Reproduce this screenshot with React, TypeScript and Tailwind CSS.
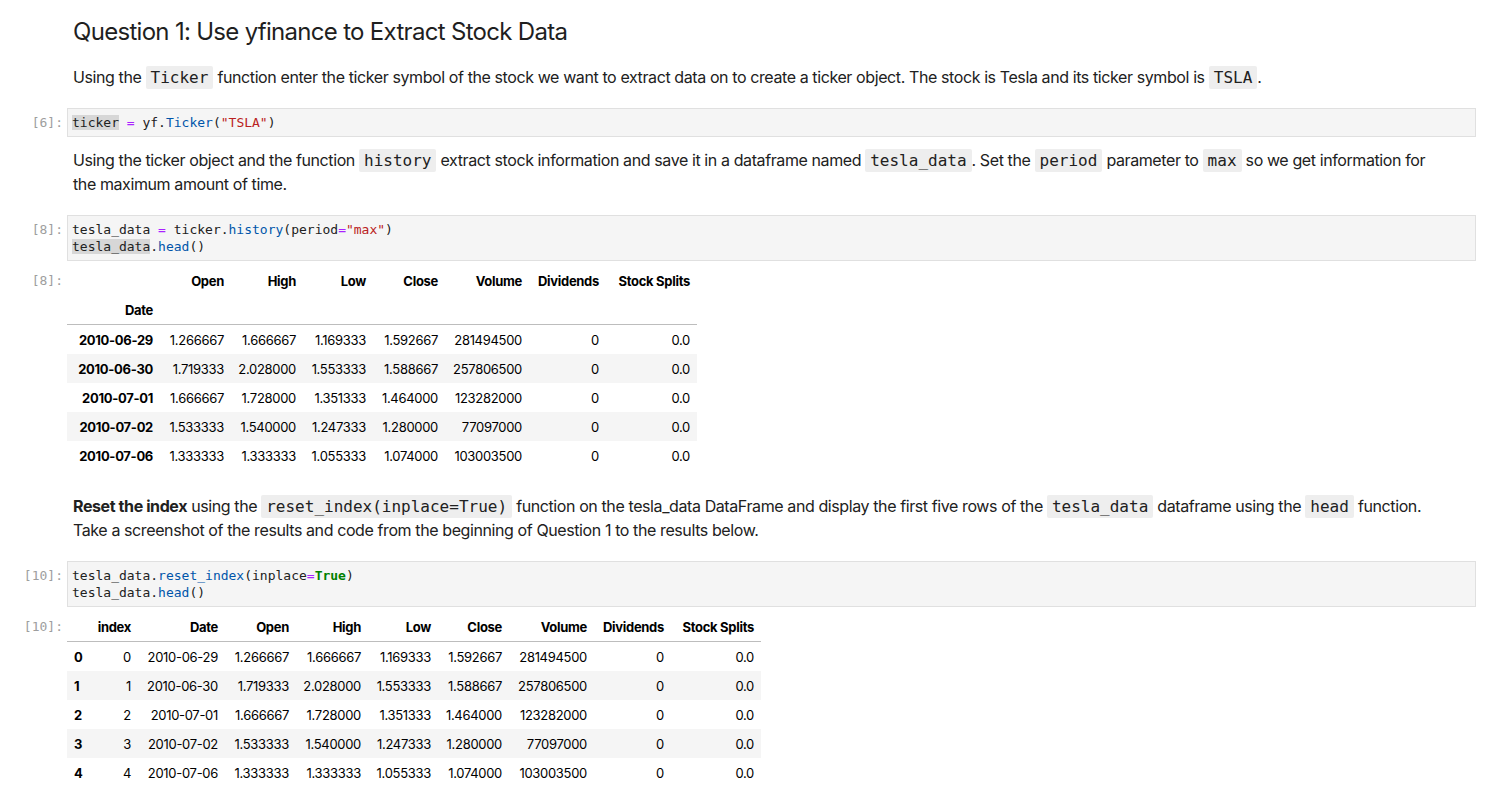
import React from "react";

const SANS = "font-['Inter','Noto_Sans',sans-serif]";
const MONO = "font-['DejaVu_Sans_Mono','Liberation_Mono',monospace]";

function C({ children }: { children: React.ReactNode }) {
  return (
    <code
      className={`${MONO} rounded-[2px] bg-[#eeeeee] px-[5px] py-[2px] text-[16px] leading-[16px] tracking-normal text-[#212121]`}
    >
      {children}
    </code>
  );
}

function Prompt({ n, pt }: { n: number; pt: string }) {
  return (
    <div
      className={`${MONO} w-[67px] shrink-0 pr-[4px] text-right text-[13px] leading-[17px] text-[#9e9e9e] ${pt}`}
    >
      [{n}]:
    </div>
  );
}

function CodeCell({ n, className, children }: { n: number; className: string; children: React.ReactNode }) {
  return (
    <div className={`flex ${className}`}>
      <Prompt n={n} pt="pt-[6px]" />
      <div
        className={`${MONO} mr-[11px] flex-1 border border-[#e0e0e0] bg-[#f5f5f5] px-[4px] py-[5px] text-[13px] leading-[17px] whitespace-pre text-[#212121]`}
      >
        {children}
      </div>
    </div>
  );
}

const hl = "bg-[#d7d7d7]";
const op = "text-[#aa22ff]";
const fn = "text-[#0055aa]";
const str = "text-[#ba2121]";

type Row = string[];

const rows1: Row[] = [
  ["2010-06-29", "1.266667", "1.666667", "1.169333", "1.592667", "281494500", "0", "0.0"],
  ["2010-06-30", "1.719333", "2.028000", "1.553333", "1.588667", "257806500", "0", "0.0"],
  ["2010-07-01", "1.666667", "1.728000", "1.351333", "1.464000", "123282000", "0", "0.0"],
  ["2010-07-02", "1.533333", "1.540000", "1.247333", "1.280000", "77097000", "0", "0.0"],
  ["2010-07-06", "1.333333", "1.333333", "1.055333", "1.074000", "103003500", "0", "0.0"],
];

const cols = ["Open", "High", "Low", "Close", "Volume", "Dividends", "Stock Splits"];
const w1 = ["w-[93px]", "w-[71px]", "w-[72px]", "w-[70px]", "w-[72px]", "w-[84px]", "w-[77px]", "w-[91px]"];
const w2 = [
  "w-[22px]",
  "w-[49px]",
  "w-[87px]",
  "w-[71px]",
  "w-[72px]",
  "w-[70px]",
  "w-[71px]",
  "w-[85px]",
  "w-[77px]",
  "w-[90px]",
];

const cell = "px-[7px] py-[6.5px] leading-[16px] text-right whitespace-nowrap";

function Table1() {
  return (
    <table
      className={`${SANS} w-[630px] table-fixed border-collapse text-[13px] tracking-[-0.3px] text-[#000000]`}
    >
      <thead className="border-b border-[#bdbdbd]">
        <tr>
          <th className={`${cell} ${w1[0]}`}></th>
          {cols.map((c, i) => (
            <th key={c} className={`${cell} ${w1[i + 1]} font-bold`}>
              {c}
            </th>
          ))}
        </tr>
        <tr>
          <th className={`${cell} font-bold`}>Date</th>
          {cols.map((c) => (
            <th key={c} className={cell}></th>
          ))}
        </tr>
      </thead>
      <tbody>
        {rows1.map((r) => (
          <tr key={r[0]} className="even:bg-[#f5f5f5]">
            <th className={`${cell} font-bold`}>{r[0]}</th>
            {r.slice(1).map((v, i) => (
              <td key={i} className={cell}>
                {v}
              </td>
            ))}
          </tr>
        ))}
      </tbody>
    </table>
  );
}

function Table2() {
  const head = ["index", "Date", ...cols];
  return (
    <table
      className={`${SANS} w-[694px] table-fixed border-collapse text-[13px] tracking-[-0.3px] text-[#000000]`}
    >
      <thead className="border-b border-[#bdbdbd]">
        <tr>
          <th className={`${cell} ${w2[0]}`}></th>
          {head.map((c, i) => (
            <th key={c} className={`${cell} ${w2[i + 1]} font-bold`}>
              {c}
            </th>
          ))}
        </tr>
      </thead>
      <tbody>
        {rows1.map((r, i) => (
          <tr key={r[0]} className="even:bg-[#f5f5f5]">
            <th className={`${cell} text-left! font-bold`}>{i}</th>
            <td className={cell}>{i}</td>
            {r.map((v, j) => (
              <td key={j} className={cell}>
                {v}
              </td>
            ))}
          </tr>
        ))}
      </tbody>
    </table>
  );
}

function Md({ className, children }: { className: string; children: React.ReactNode }) {
  return (
    <div className={`flex ${className}`}>
      <div className="w-[67px] shrink-0" />
      <div
        className={`${SANS} mr-[11px] flex-1 pl-[6px] pr-[30px] text-[16px] leading-[24px] tracking-[-0.4px] text-[#212121]`}
      >
        {children}
      </div>
    </div>
  );
}

export default function App() {
  return (
    <div className="min-h-screen w-full bg-white pb-[20px] pt-[17px]">
      <Md className="">
        <h2 className="text-[24px] leading-[30px] font-normal tracking-[-0.7px] text-[#1f1f1f]">
          Question 1: Use yfinance to Extract Stock Data
        </h2>
      </Md>

      <Md className="mt-[18px]">
        <p>
          Using the <C>Ticker</C> function enter the ticker symbol of the stock we want to extract data on to create a
          ticker object. The stock is Tesla and its ticker symbol is <C>TSLA</C>.
        </p>
      </Md>

      <CodeCell n={6} className="mt-[19px]">
        <span className={hl}>ticker</span> <span className={op}>=</span> yf.<span className={fn}>Ticker</span>(
        <span className={str}>"TSLA"</span>)
      </CodeCell>

      <Md className="mt-[11px]">
        <p>
          Using the ticker object and the function <C>history</C> extract stock information and save it in a dataframe
          named <C>tesla_data</C>. Set the <C>period</C> parameter to <C>max</C> so we get information for the maximum
          amount of time.
        </p>
      </Md>

      <CodeCell n={8} className="mt-[19px]">
        tesla_data <span className={op}>=</span> ticker.<span className={fn}>history</span>(period
        <span className={op}>=</span>
        <span className={str}>"max"</span>){"\n"}
        <span className={hl}>tesla_data</span>.<span className={fn}>head</span>()
      </CodeCell>

      <div className="mt-[5px] flex">
        <Prompt n={8} pt="pt-[6px]" />
        <div className="flex-1">
          <Table1 />
        </div>
      </div>

      <Md className="mt-[24px]">
        <p>
          <b className="font-bold">Reset the index</b> using the <C>reset_index(inplace=True)</C> function on the
          tesla_data DataFrame and display the first five rows of the <C>tesla_data</C> dataframe using the{" "}
          <C>head</C> function. Take a screenshot of the results and code from the beginning of Question 1 to the
          results below.
        </p>
      </Md>

      <CodeCell n={10} className="mt-[19px]">
        tesla_data.<span className={fn}>reset_index</span>(inplace<span className={op}>=</span>
        <span className="font-bold text-[#008000]">True</span>){"\n"}
        tesla_data.<span className={fn}>head</span>()
      </CodeCell>

      <div className="mt-[5px] flex">
        <Prompt n={10} pt="pt-[6px]" />
        <div className="flex-1">
          <Table2 />
        </div>
      </div>
    </div>
  );
}
